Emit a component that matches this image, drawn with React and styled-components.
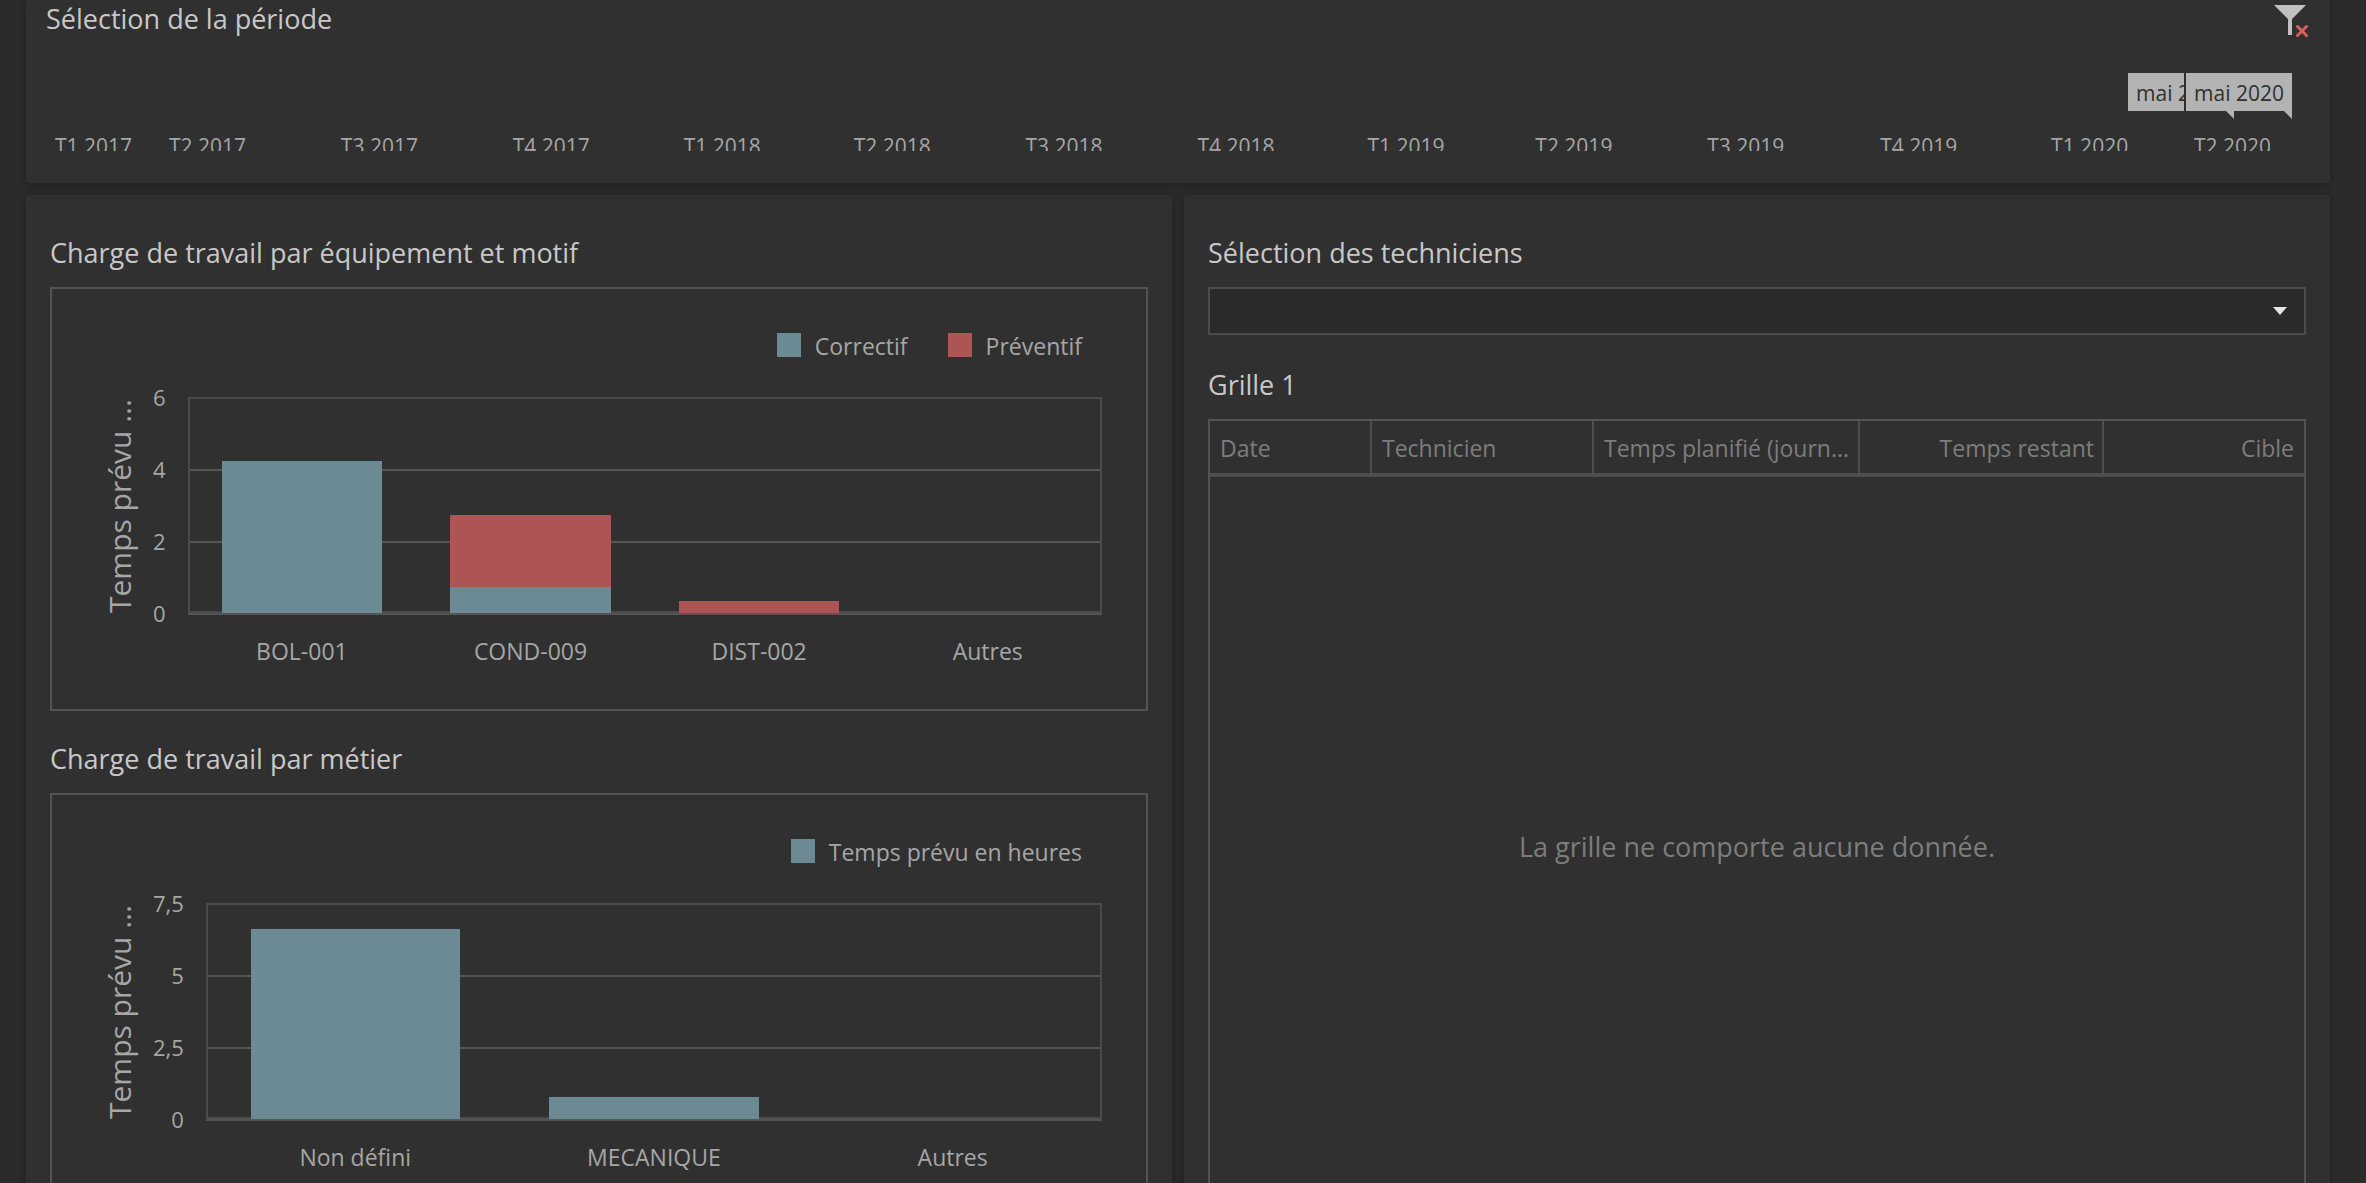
import React, { useState } from 'react'
import styled, { createGlobalStyle } from 'styled-components'

const GlobalStyle = createGlobalStyle`
  * {
    box-sizing: border-box;
  }
  body {
    margin: 0;
    background: #2b2b2b;
    color: #a6a6a6;
    font-family: 'Open Sans', 'Noto Sans', sans-serif;
    font-size: 23px;
    line-height: 32px;
  }
`

const colors = {
  correctif: '#6b8a94',
  preventif: '#ad5554',
}

const periods = [
  { label: 'T1 2017', span: 114 },
  { label: 'T2 2017', span: 172 },
  { label: 'T3 2017', span: 172 },
  { label: 'T4 2017', span: 171 },
  { label: 'T1 2018', span: 170 },
  { label: 'T2 2018', span: 172 },
  { label: 'T3 2018', span: 172 },
  { label: 'T4 2018', span: 170 },
  { label: 'T1 2019', span: 168 },
  { label: 'T2 2019', span: 172 },
  { label: 'T3 2019', span: 173 },
  { label: 'T4 2019', span: 171 },
  { label: 'T1 2020', span: 143 },
  { label: 'T2 2020', span: 76 },
]

const charts = [
  {
    title: 'Charge de travail par équipement et motif',
    legend: [
      { label: 'Correctif', color: colors.correctif },
      { label: 'Préventif', color: colors.preventif },
    ],
    ticks: ['6', '4', '2', '0'],
    max: 6,
    bars: [
      { label: 'BOL-001', stack: [{ value: 4.26, color: colors.correctif }] },
      {
        label: 'COND-009',
        stack: [
          { value: 2.02, color: colors.preventif },
          { value: 0.73, color: colors.correctif },
        ],
      },
      { label: 'DIST-002', stack: [{ value: 0.34, color: colors.preventif }] },
      { label: 'Autres', stack: [] },
    ],
  },
  {
    title: 'Charge de travail par métier',
    legend: [{ label: 'Temps prévu en heures', color: colors.correctif }],
    ticks: ['7,5', '5', '2,5', '0'],
    max: 7.5,
    bars: [
      { label: 'Non défini', stack: [{ value: 6.66, color: colors.correctif }] },
      { label: 'MECANIQUE', stack: [{ value: 0.77, color: colors.correctif }] },
      { label: 'Autres', stack: [] },
    ],
  },
]

const columns = [
  { label: 'Date', width: 162 },
  { label: 'Technicien', width: 222 },
  { label: 'Temps planifié (journ...', width: 266 },
  { label: 'Temps restant', width: 244, right: true },
  { label: 'Cible', width: 200, right: true },
]

const Page = styled.main`
  height: 100vh;
  overflow: hidden;
  padding: 0 36px 0 26px;
`

const Panel = styled.section`
  background: #303030;
  border-radius: 4px;
  box-shadow: 0 2px 10px rgba(0, 0, 0, 0.25);
`

const PeriodPanel = styled(Panel)`
  border-radius: 0 0 4px 4px;
  padding: 0 22px 32px 20px;
  margin-bottom: 12px;
`

const PeriodHeader = styled.header`
  display: flex;
  justify-content: space-between;
  align-items: flex-start;
  height: 73px;
  padding-top: 1px;
`

const Title = styled.h2`
  display: block;
  margin: 0;
  color: #c8c8c8;
  font-size: 27px;
  font-weight: 400;
  line-height: 36px;
`

const ClearButton = styled.button`
  display: flex;
  margin: 4px 0 0;
  padding: 0;
  border: 0;
  background: none;
  cursor: pointer;
`

const Markers = styled.div`
  display: flex;
  justify-content: flex-end;
  padding-right: 16px;
`

const Marker = styled.div`
  position: relative;
  width: 106px;
  height: 38px;
  background: #b3b3b3;
  color: #303030;
  font-size: 21px;
  line-height: 40px;
  text-align: center;
  white-space: nowrap;

  & + & {
    width: 108px;
    margin-left: -50px;
    border-left: 2px solid #303030;
  }

  &::after {
    content: '';
    position: absolute;
    right: 0;
    top: 100%;
    width: 8px;
    height: 8px;
    background: #b3b3b3;
    clip-path: polygon(0 0, 100% 0, 100% 100%);
  }
`

// the scale is deliberately shorter than its text, the labels get clipped
const Scale = styled.div`
  display: grid;
  grid-template-columns: ${(p) => p.$columns};
  height: 18px;
  margin: 22px 38px 0 9px;
  overflow: hidden;
  font-size: 21px;
  line-height: 26px;
  white-space: nowrap;
`

const Columns = styled.div`
  display: grid;
  grid-template-columns: 1fr 1fr;
  gap: 12px;
`

const Column = styled(Panel)`
  min-width: 0;
  padding: 40px 24px 30px;
`

const Item = styled.div`
  margin-bottom: 30px;

  ${Title} {
    margin-bottom: 16px;
  }
`

const Card = styled.div`
  border: 2px solid #535353;
  padding: 44px 44px 42px 49px;
`

const Legend = styled.div`
  display: flex;
  justify-content: flex-end;
  gap: 40px;
  height: 24px;
  padding-right: 20px;
  margin-bottom: 28px;
`

const LegendItem = styled.div`
  display: flex;
  gap: 14px;
  line-height: 26px;

  &::before {
    content: '';
    width: 24px;
    height: 24px;
    background: ${(p) => p.$color};
  }
`

const ChartBody = styled.div`
  display: flex;
`

const AxisTitle = styled.div`
  width: 38px;
  height: 218px;
  margin: 12px 14px 0 0;
  writing-mode: vertical-rl;
  transform: rotate(180deg);
  font-size: 30px;
  line-height: 38px;
  text-align: center;
  white-space: nowrap;
`

const Ticks = styled.div`
  display: flex;
  flex-direction: column;
  justify-content: space-between;
  height: 240px;
  margin-right: 22px;
  font-size: 22px;
  line-height: 24px;
  text-align: right;
`

const PlotArea = styled.div`
  flex: 1;
  margin-top: 12px;
`

const Plot = styled.div`
  display: grid;
  height: 218px;
  border: 2px solid #4a4a4a;
  border-bottom-color: #555;
`

const GridLines = styled.div`
  grid-area: 1 / 1;
  display: grid;
  grid-template-rows: 72px 72px 1fr;

  div {
    border-bottom: 2px solid #555;
  }
  div:last-child {
    border-color: #4a4a4a;
  }
`

const Bars = styled.div`
  grid-area: 1 / 1;
  display: flex;
  margin: 0 -2px;
`

const Bar = styled.div`
  flex: 1;
  display: flex;
  flex-direction: column;
  justify-content: flex-end;
  padding: 0 ${(p) => 15 / p.$count}%;
`

const Segment = styled.div`
  background: ${(p) => p.$color};
`

const Categories = styled.div`
  display: flex;
  margin-top: 20px;

  div {
    flex: 1;
    text-align: center;
  }
`

const SelectItem = styled(Item)`
  margin-bottom: 32px;
`

const SelectBox = styled.div`
  position: relative;

  svg {
    position: absolute;
    right: 19px;
    top: 20px;
    pointer-events: none;
  }
`

const Select = styled.select`
  display: block;
  width: 100%;
  height: 48px;
  padding: 0 48px 0 10px;
  border: 2px solid #4c4c4c;
  border-radius: 0;
  background: #2a2a2a;
  color: #c8c8c8;
  font: inherit;
  appearance: none;
`

const Table = styled.table`
  width: 100%;
  table-layout: fixed;
  border: 2px solid #535353;
  border-collapse: separate;
  border-spacing: 0;
  color: #7d7d7d;
`

const HeadCell = styled.th`
  width: ${(p) => p.$width}%;
  height: 56px;
  padding: 2px 10px 0;
  border-bottom: 4px solid #4d4d4d;
  font-weight: 400;
  text-align: ${(p) => (p.$right ? 'right' : 'left')};
  white-space: nowrap;
  overflow: hidden;
  background: linear-gradient(#4d4d4d, #4d4d4d) right / 2px 100% no-repeat;

  &:last-child {
    background: none;
  }
`

const EmptyCell = styled.td`
  height: 740px;
  padding: 0;
  font-size: 27px;
  text-align: center;
`

function ClearFilterIcon() {
  return (
    <svg width="34" height="32" viewBox="0 0 34 32" aria-hidden="true">
      <path d="M0 0H32L18 14V30H14V14Z" fill="#c0c0c0" />
      <path d="M23.5 21.5L32.5 30.5M32.5 21.5L23.5 30.5" stroke="#d9605a" strokeWidth="3" strokeLinecap="round" fill="none" />
    </svg>
  )
}

function PeriodSelector() {
  return (
    <PeriodPanel>
      <PeriodHeader>
        <Title>Sélection de la période</Title>
        <ClearButton type="button" aria-label="Effacer le filtre">
          <ClearFilterIcon />
        </ClearButton>
      </PeriodHeader>
      <Markers>
        <Marker>mai 2020</Marker>
        <Marker>mai 2020</Marker>
      </Markers>
      <Scale $columns={periods.map((item) => `minmax(0, ${item.span}fr)`).join(' ')}>
        {periods.map((item) => <span key={item.label}>{item.label}</span>)}
      </Scale>
    </PeriodPanel>
  )
}

function Chart(props) {
  return (
    <Item>
      <Title>{props.title}</Title>
      <Card>
        <Legend>
          {props.legend.map((item) => <LegendItem key={item.label} $color={item.color}>{item.label}</LegendItem>)}
        </Legend>
        <ChartBody>
          <AxisTitle>Temps prévu ...</AxisTitle>
          <Ticks>
            {props.ticks.map((item) => <div key={item}>{item}</div>)}
          </Ticks>
          <PlotArea>
            <Plot>
              <GridLines>
                <div />
                <div />
                <div />
              </GridLines>
              <Bars>
                {props.bars.map((bar) => (
                  <Bar key={bar.label} $count={props.bars.length}>
                    {bar.stack.map((item) => <Segment key={item.color} $color={item.color} style={{ height: `${item.value / props.max * 100}%` }} />)}
                  </Bar>
                ))}
              </Bars>
            </Plot>
            <Categories>
              {props.bars.map((bar) => <div key={bar.label}>{bar.label}</div>)}
            </Categories>
          </PlotArea>
        </ChartBody>
      </Card>
    </Item>
  )
}

function TechnicianSelect() {
  const [value, setValue] = useState('')

  return (
    <SelectItem>
      <Title as="label" htmlFor="techniciens">Sélection des techniciens</Title>
      <SelectBox>
        <Select id="techniciens" value={value} onChange={(e) => setValue(e.target.value)}>
          <option value=""></option>
        </Select>
        <svg width="14" height="8" viewBox="0 0 14 8" aria-hidden="true">
          <path d="M0 0H14L7 8Z" fill="#e6e6e6" />
        </svg>
      </SelectBox>
    </SelectItem>
  )
}

function TechnicianGrid() {
  const total = columns.reduce((sum, item) => sum + item.width, 0)

  return (
    <Item>
      <Title>Grille 1</Title>
      <Table>
        <thead>
          <tr>
            {columns.map((item) => (
              <HeadCell key={item.label} scope="col" $width={item.width / total * 100} $right={item.right}>{item.label}</HeadCell>
            ))}
          </tr>
        </thead>
        <tbody>
          <tr>
            <EmptyCell colSpan={columns.length}>La grille ne comporte aucune donnée.</EmptyCell>
          </tr>
        </tbody>
      </Table>
    </Item>
  )
}

export default function App() {
  return (
    <Page>
      <GlobalStyle />
      <PeriodSelector />
      <Columns>
        <Column>
          {charts.map((item) => <Chart key={item.title} {...item} />)}
        </Column>
        <Column>
          <TechnicianSelect />
          <TechnicianGrid />
        </Column>
      </Columns>
    </Page>
  )
}
